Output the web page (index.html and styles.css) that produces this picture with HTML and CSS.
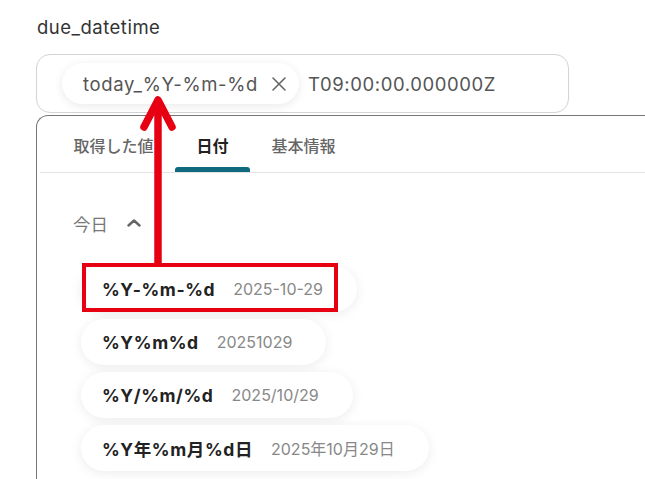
FILE: index.html
```html
<!DOCTYPE html>
<html lang="ja">
<head>
<meta charset="utf-8">
<link rel="stylesheet" href="styles.css">
</head>
<body>
<div class="page">
  <div class="label">due_datetime</div>
  <div class="input">
    <span class="chip">
      <span class="chip-text">today_%Y-%m-%d</span>
      <svg class="chip-x" width="16" height="16" viewBox="0 0 16 16"><path d="M2 2 L14 14 M14 2 L2 14" stroke="#666" stroke-width="1.6" fill="none" stroke-linecap="round"/></svg>
    </span>
    <span class="suffix">T09:00:00.000000Z</span>
  </div>
  <div class="panel">
    <div class="tabs">
      <div class="tab">取得した値</div>
      <div class="tab active">日付</div>
      <div class="tab">基本情報</div>
    </div>
    <div class="section">
      <div class="section-head">
        <span>今日</span>
        <svg width="14" height="8" viewBox="0 0 14 8"><path d="M1.5 6.5 L7 1.5 L12.5 6.5" stroke="#666" stroke-width="2.4" fill="none" stroke-linecap="round" stroke-linejoin="round"/></svg>
      </div>
      <div class="items">
        <div class="item"><b>%Y-%m-%d</b><span class="val">2025-10-29</span></div>
        <div class="item"><b>%Y%m%d</b><span class="val">20251029</span></div>
        <div class="item"><b>%Y/%m/%d</b><span class="val">2025/10/29</span></div>
        <div class="item"><b>%Y年%m月%d日</b><span class="val">2025年10月29日</span></div>
      </div>
    </div>
  </div>
  <div class="highlight"></div>
  <svg class="arrow" width="645" height="479" viewBox="0 0 645 479">
    <path d="M158 102 L158 266" stroke="#e60012" stroke-width="7.5" fill="none"/>
    <path d="M144 127 L158 100 L172 127" stroke="#e60012" stroke-width="7.5" fill="none" stroke-linecap="round" stroke-linejoin="round"/>
  </svg>
</div>
</body>
</html>
```
FILE: styles.css
```css
html, body {
  margin: 0;
  padding: 0;
  background: #fff;
  overflow: hidden;
}
body {
  font-family: Inter, "Noto Sans CJK JP", sans-serif;
  width: 645px;
  height: 479px;
}
.page {
  position: relative;
  width: 645px;
  height: 479px;
  overflow: hidden;
}
.label {
  padding: 16px 0 0 37px;
  font-size: 18.5px;
  letter-spacing: 0.5px;
  line-height: 22px;
  color: #333;
  height: 39px;
  box-sizing: border-box;
}
.input {
  margin: 15px 0 0 36px;
  width: 533px;
  height: 59px;
  box-sizing: border-box;
  border: 1px solid #d2d4d8;
  border-radius: 14px;
  display: flex;
  align-items: center;
  padding-left: 25px;
}
.chip {
  display: flex;
  align-items: center;
  height: 41px;
  padding: 0 12px 0 21px;
  background: #fff;
  border-radius: 21px;
  box-shadow: 0 2px 10px rgba(0,0,0,0.09);
  color: #555;
  font-size: 18.5px;
  letter-spacing: 0.65px;
}
.chip-x {
  margin-left: 13px;
}
.suffix {
  margin-left: 9px;
  font-size: 18.5px;
  letter-spacing: 0.6px;
  color: #555;
}
.panel {
  margin: 2px 0 0 36px;
  width: 640px;
  height: 380px;
  border-top: 1.5px solid #777;
  border-left: 1.5px solid #777;
  border-top-left-radius: 12px;
  box-sizing: border-box;
}
.tabs {
  display: flex;
  height: 57px;
  padding-left: 12px;
  border-bottom: 1px solid #e4e4e4;
  box-sizing: border-box;
  margin-left: 3px;
}
.tab {
  padding: 2px 21.5px 0;
  font-size: 16px;
  color: #666;
  display: flex;
  align-items: center;
  position: relative;
  font-weight: 500;
}
.tab.active {
  color: #222;
  font-weight: 700;
}
.tab.active::after {
  content: "";
  position: absolute;
  left: 0;
  right: 0;
  bottom: 0;
  height: 5px;
  background: #0f6a80;
  border-radius: 3px 3px 0 0;
}
.section {
  padding: 38px 0 0 36px;
}
.section-head {
  display: flex;
  align-items: center;
  gap: 19px;
  font-size: 17.5px;
  color: #777;
  height: 24px;
}
.items {
  margin-top: 31px;
  display: flex;
  flex-direction: column;
  align-items: flex-start;
  gap: 7px;
  margin-left: 8px;
}
.item {
  height: 46px;
  display: flex;
  align-items: center;
  padding: 0 34px 0 21px;
  background: #fff;
  border-radius: 23px;
  box-shadow: 0 2px 12px rgba(0,0,0,0.08);
}
.item b {
  font-size: 17.5px;
  font-weight: 700;
  color: #222;
  letter-spacing: 0.6px;
}
.val {
  margin-left: 18px;
  font-size: 16px;
  color: #888;
}
.highlight {
  position: absolute;
  left: 82px;
  top: 263px;
  width: 256px;
  height: 49px;
  box-sizing: border-box;
  border: 4.5px solid #e60012;
}
.arrow {
  position: absolute;
  left: 0;
  top: 0;
  pointer-events: none;
}
```
